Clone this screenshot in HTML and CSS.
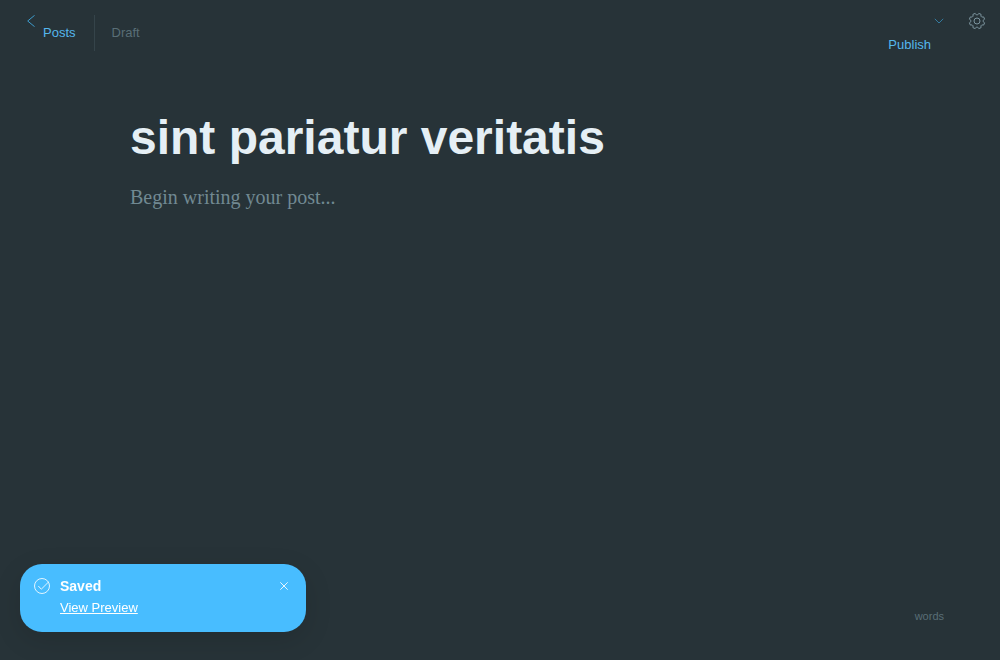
FILE: index.html
```
<!DOCTYPE html>
<html lang="en">
<head>
<meta charset="utf-8">
<title>Editor</title>
<link rel="stylesheet" href="styles.css">
</head>
<body>
<div class="editor">
  <header class="topbar">
    <nav class="crumbs">
      <a class="back" href="#">
        <svg class="back-icon" viewBox="0 0 8 12" aria-hidden="true"><path d="M7.600.3.700 6l6.900 5.700"/></svg>
        <span class="back-label">Posts</span>
      </a>
      <span class="status">Draft</span>
    </nav>
    <div class="actions">
      <button class="publish" type="button">
        <span class="publish-label">Publish</span>
        <svg class="chevron" viewBox="0 0 10 6" aria-hidden="true"><path d="m.8.800 4.200 4.200L9.200.8"/></svg>
      </button>
      <button class="settings" type="button" aria-label="Settings">
        <svg class="gear" viewBox="-13.5 -13.5 27 27" aria-hidden="true"><path d="M-1-9.200H1L2.700-11.400 6.100-10 5.900-7.200 7.200-5.900 10-6.100 11.400-2.700 9.200-1V1L11.400 2.700 10 6.100 7.200 5.900 5.900 7.200 6.100 10 2.700 11.400 1 9.200H-1L-2.700 11.400-6.100 10-5.900 7.200-7.200 5.900-10 6.100-11.400 2.700-9.200 1V-1L-11.400-2.700-10-6.100-7.200-5.900-5.900-7.200-6.100-10-2.700-11.400Z"/><circle r="4.500"/></svg>
      </button>
    </div>
  </header>
  <main class="canvas">
    <input class="title" type="text" aria-label="Post title" value="sint pariatur veritatis">
    <textarea class="body-text" aria-label="Post body" placeholder="Begin writing your post..."></textarea>
  </main>
  <div class="word-count">words</div>
  <aside class="toast" role="status">
    <svg class="check" viewBox="0 0 16 16" aria-hidden="true"><circle cx="8" cy="8" r="7.500"/><path d="m4.300 8 3 3.200L14.500 4"/></svg>
    <div class="toast-content">
      <strong class="toast-title">Saved</strong>
      <a class="toast-link" href="#">View Preview</a>
    </div>
    <button class="close" type="button" aria-label="Close">
      <svg class="close-icon" viewBox="0 0 8 8" aria-hidden="true"><path d="m.3.300 7.400 7.400M7.700.3.300 7.700"/></svg>
    </button>
  </aside>
</div>
</body>
</html>
```
FILE: styles.css
```
* { box-sizing: border-box; }
body { margin: 0; background: #273338; color: #e5eff5; font: 13px/20px "Liberation Sans", Arial, sans-serif; }
svg { display: block; fill: none; }
button { padding: 0; border: 0; background: none; color: inherit; font: inherit; cursor: pointer; }
.editor { min-height: 100vh; display: flex; flex-direction: column; }
.topbar { display: flex; justify-content: space-between; padding: 12px 14px 0 27px; min-height: 64px; }
.crumbs { display: flex; align-items: flex-start; padding-top: 3px; }
.back { display: flex; gap: 8px; padding-right: 18px; color: #55b7ed; text-decoration: none; }
.back-icon { width: 8px; height: 12px; stroke: #3e9ccc; }
.back-label { padding-top: 8px; }
.status { min-height: 36px; padding: 8px 0 0 17px; border-left: 1px solid #35444a; color: #596e76; }
.actions { display: flex; align-items: flex-start; gap: 24px; }
.publish { display: flex; gap: 3px; color: #55b7ed; }
.publish-label { padding-top: 23px; }
.chevron { width: 10px; height: 6px; margin-top: 6px; stroke: #347b9f; }
.gear { width: 18px; height: 18px; stroke: #7c949e; stroke-width: 1.5; stroke-linejoin: round; }
.canvas { flex: 1; display: flex; flex-direction: column; width: 100%; max-width: 740px; margin: 0 auto; padding-top: 44px; }
.title { width: 100%; height: 60px; padding: 0; border: 0; outline: 0; background: none; color: #e5eff5; font: bold 48px/60px "Liberation Sans", Arial, sans-serif; }
.body-text { flex: 1; width: 100%; margin-top: 13px; padding: 0; border: 0; outline: 0; resize: none; background: none; color: #e5eff5; font: 20px/32px "Liberation Serif", "Times New Roman", serif; }
.body-text::placeholder { color: #718992; opacity: 1; }
.word-count { align-self: flex-end; padding: 0 56px 34px 0; color: #596e76; font-size: 11px; }
.toast { position: fixed; left: 20px; bottom: 28px; display: flex; align-items: flex-start; width: 286px; padding: 12px 18px 14px 14px; border-radius: 22px; background: #48bdff; color: #fff; box-shadow: 0 8px 28px rgba(0, 0, 0, .12); }
.check { width: 16px; height: 16px; margin-top: 2px; stroke: #e2f5ff; }
.toast-content { flex: 1; display: flex; flex-direction: column; align-items: flex-start; gap: 2px; padding-left: 10px; }
.toast-title { font-size: 14px; }
.toast-link { color: #fff; }
.close { margin-top: 6px; }
.close-icon { width: 8px; height: 8px; stroke: #e6f6ff; }
```
